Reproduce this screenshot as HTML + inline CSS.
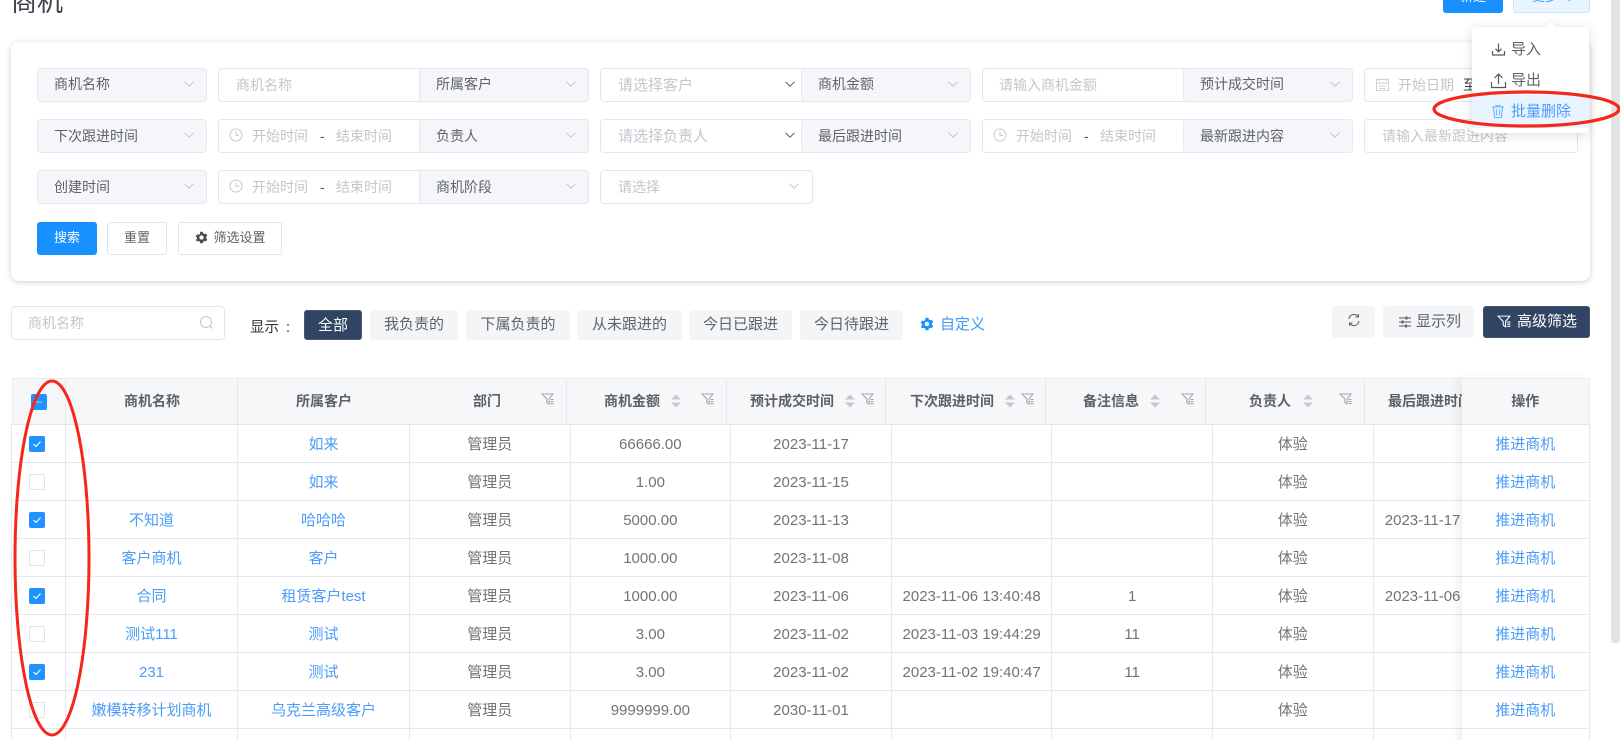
<!DOCTYPE html>
<html lang="zh">
<head>
<meta charset="utf-8">
<title>商机</title>
<style>
*{box-sizing:border-box}
html,body{margin:0;padding:0;width:1620px;height:740px;overflow:hidden;background:#fff}
body{font-family:"Liberation Sans","Noto Sans CJK SC",sans-serif;color:#606266;font-size:14px}
#r{position:absolute;left:0;top:0;width:1620px;height:740px;overflow:hidden;filter:blur(.3px)}
.a{position:absolute;white-space:nowrap}
.card{position:absolute;left:11px;top:42px;width:1579px;height:239px;background:#fff;border-radius:8px;box-shadow:0 1px 6px rgba(0,0,0,.2)}
.sel{position:absolute;width:170px;height:34px;background:#f5f6fa;border:1px solid #e5e8ef;border-radius:4px;line-height:32px;padding-left:16px;color:#5f6369;font-size:14px}
.sel.t{line-height:30px}
.sel svg{position:absolute;left:145px;top:9px}
.inp{position:absolute;height:34px;background:#fff;border:1px solid #e3e6ec;border-radius:4px}
.ph{position:absolute;color:#c3c6cd;font-size:14px;line-height:20px;white-space:nowrap}
.btn{position:absolute;top:222px;height:33px;border:1px solid #e1e4ea;border-radius:3px;background:#fff;color:#606266;font-size:13px;line-height:30px;text-align:center}
.tab{position:absolute;top:310px;height:30px;background:#f4f5f7;border-radius:3px;color:#5d6470;font-size:15px;line-height:30px;text-align:center}
.tb{position:absolute;top:306px;height:32px;background:#f4f5f7;border-radius:3px;color:#5d6470;font-size:15px;line-height:31px}
.hd{position:absolute;left:11.5px;top:378px;width:1578px;height:46.5px;background:#f6f7f8;border:1px solid #e8ebf1;border-bottom:1px solid #e2e6ee}
.vl{position:absolute;top:378px;width:1px;height:46px;background:#e4e7ee}
.th{position:absolute;top:391px;font-size:14px;line-height:20px;font-weight:700;color:#5c6068;white-space:nowrap}
table{position:absolute;border-collapse:collapse;table-layout:fixed;font-size:15px;color:#707377}
td{height:38px;padding:3px 0 0;border:1px solid #e4e8f0;text-align:center;white-space:nowrap;overflow:hidden;line-height:34px}
td.l{color:#4b9cf8}
td.c{text-align:left;padding-left:11px}
.cb{position:absolute;left:29px;width:16px;height:16px;border-radius:2px;border:1px solid #e2e4ea;background:#fff}
.cb.on{background:#1f93ff;border-color:#1f93ff}
.cb svg{position:absolute;left:2px;top:2px}
.fix{position:absolute;left:1462px;top:378px;width:127.5px;height:380px;background:#fff;box-shadow:-5px 0 8px rgba(0,0,0,.06)}
.fix .h{position:absolute;left:0;top:0;width:100%;height:46.5px;background:#f6f7f8;border-top:1px solid #e8ebf1;border-right:1px solid #e8ebf1;border-bottom:1px solid #e2e6ee;text-align:center;font-size:14px;font-weight:700;color:#5c6068;line-height:44px}
.fix .c{position:absolute;left:0;width:100%;height:38px;border-bottom:1px solid #e4e8f0;border-right:1px solid #e4e8f0;text-align:center;color:#4b9cf8;font-size:15px;line-height:40px}
.dd{position:absolute;left:1472px;top:27px;width:117px;height:106px;background:#fff;border-radius:4px;box-shadow:0 2px 12px rgba(0,0,0,.14)}
.arrow{position:absolute;left:1546px;top:23px;width:9px;height:9px;background:#fff;transform:rotate(45deg);box-shadow:-1px -1px 3px rgba(0,0,0,.05)}
.thumb{position:absolute;left:1611px;top:0;width:9px;height:643px;background:#e3e3e3;border-radius:0 0 3px 3px}
</style>
</head>
<body>
<div id="r">
<svg width="0" height="0" style="position:absolute">
<defs>
<symbol id="chev" viewBox="0 0 12 12"><path d="M1.500 3.800 6 8.200l4.500-4.400" fill="none" stroke="currentColor" stroke-width="1"/></symbol>
<symbol id="clock" viewBox="0 0 14 14"><circle cx="7" cy="7" r="6" fill="none" stroke="#c9ccd3" stroke-width="1.100"/><path d="M7 3.400V7.300H10.200" fill="none" stroke="#c9ccd3" stroke-width="1.100"/></symbol>
<symbol id="filt" viewBox="0 0 14 14"><path d="M1 2h11L8 7v5L5.800 10.500V7Z" fill="none" stroke="#9ea3ab" stroke-width="1"/><path d="M9.500 7.500h3M9.500 9.500h3M9.500 11.500h3" stroke="#9ea3ab" stroke-width="1"/></symbol>
<symbol id="sort" viewBox="0 0 12 16"><path d="M6 1.500 11 6.500H1ZM6 14.500 1 9.500H11Z" fill="#c3c7ce"/></symbol>
<symbol id="gear" viewBox="0 0 14 14"><path d="M5.600 .8h2.800l.4 1.700 1.300.7 1.700-.5 1.400 2.400-1.300 1.200v1.400l1.300 1.200-1.400 2.400-1.700-.5-1.300.7-.4 1.700H5.600l-.4-1.700-1.300-.7-1.700.5L.8 9.700l1.300-1.200V7.100L.8 5.900l1.400-2.400 1.700.5 1.300-.7Z" fill="currentColor"/><circle cx="7" cy="7" r="2.300" fill="#fff"/></symbol>
</defs>
</svg>

<!-- top -->
<div class="a" style="left:11px;top:-16px;font-size:26px;line-height:36px;color:#3a3f48">商机</div>
<div class="a" style="left:1443px;top:-20px;width:60px;height:33px;background:#1890ff;border-radius:3px;color:#fff;font-size:13px;line-height:33px;text-align:center">新建</div>
<div class="a" style="left:1513px;top:-20px;width:77px;height:33px;background:#e8f4ff;border:1px solid #c9e4fd;border-radius:3px;color:#4b9cf8;font-size:13px;line-height:31px;padding-left:18px">更多 <span style="font-size:9px;margin-left:4px">⌄</span></div>

<!-- filter card -->
<div class="card"></div>

<!-- row 1 -->
<div class="inp" style="left:218px;top:68px;width:210px"></div>
<div class="ph" style="left:236px;top:75px">商机名称</div>
<div class="inp" style="left:600px;top:68px;width:210px"></div>
<div class="ph" style="left:618px;top:76px;font-size:15px">请选择客户</div>
<svg class="a" style="left:784px;top:78px;color:#555a62" width="12" height="12"><use href="#chev"/></svg>
<div class="inp" style="left:982px;top:68px;width:210px"></div>
<div class="ph" style="left:999px;top:75px">请输入商机金额</div>
<div class="inp" style="left:1364px;top:68px;width:214px"></div>
<svg class="a" style="left:1375px;top:77px" width="15" height="15" viewBox="0 0 15 15"><path d="M1.500 2.500h12v11h-12ZM1.500 6h12M4 1v3M11 1v3M4 9h7M4 11.500h7" fill="none" stroke="#cfd2d8" stroke-width="1"/></svg>
<div class="ph" style="left:1398px;top:75px">开始日期</div>
<div class="a" style="left:1463px;top:75px;font-size:14px;line-height:20px;color:#444">至</div>

<!-- row 2 -->
<div class="inp" style="left:218px;top:119px;width:210px"></div>
<svg class="a" style="left:229px;top:128px" width="14" height="14"><use href="#clock"/></svg>
<div class="ph" style="left:252px;top:126px">开始时间</div>
<div class="a" style="left:320px;top:126px;line-height:20px;color:#555">-</div>
<div class="ph" style="left:336px;top:126px">结束时间</div>
<div class="inp" style="left:600px;top:119px;width:210px"></div>
<div class="ph" style="left:618px;top:127px;font-size:15px">请选择负责人</div>
<svg class="a" style="left:784px;top:129px;color:#555a62" width="12" height="12"><use href="#chev"/></svg>
<div class="inp" style="left:982px;top:119px;width:210px"></div>
<svg class="a" style="left:993px;top:128px" width="14" height="14"><use href="#clock"/></svg>
<div class="ph" style="left:1016px;top:126px">开始时间</div>
<div class="a" style="left:1084px;top:126px;line-height:20px;color:#555">-</div>
<div class="ph" style="left:1100px;top:126px">结束时间</div>
<div class="inp" style="left:1364px;top:119px;width:214px"></div>
<div class="ph" style="left:1382px;top:126px">请输入最新跟进内容</div>

<!-- row 3 -->
<div class="inp" style="left:218px;top:170px;width:210px"></div>
<svg class="a" style="left:229px;top:179px" width="14" height="14"><use href="#clock"/></svg>
<div class="ph" style="left:252px;top:177px">开始时间</div>
<div class="a" style="left:320px;top:177px;line-height:20px;color:#555">-</div>
<div class="ph" style="left:336px;top:177px">结束时间</div>
<div class="inp" style="left:600px;top:170px;width:213px"></div>
<div class="ph" style="left:618px;top:177px">请选择</div>
<svg class="a" style="left:788px;top:180px;color:#c0c4cc" width="12" height="12"><use href="#chev"/></svg>

<!-- select labels -->
<div class="sel t" style="left:37px;top:68px">商机名称<svg width="12" height="12" style="color:#c0c4cc"><use href="#chev"/></svg></div>
<div class="sel t" style="left:419px;top:68px">所属客户<svg width="12" height="12" style="color:#c0c4cc"><use href="#chev"/></svg></div>
<div class="sel t" style="left:801px;top:68px">商机金额<svg width="12" height="12" style="color:#c0c4cc"><use href="#chev"/></svg></div>
<div class="sel t" style="left:1183px;top:68px">预计成交时间<svg width="12" height="12" style="color:#c0c4cc"><use href="#chev"/></svg></div>
<div class="sel" style="left:37px;top:119px">下次跟进时间<svg width="12" height="12" style="color:#c0c4cc"><use href="#chev"/></svg></div>
<div class="sel" style="left:419px;top:119px">负责人<svg width="12" height="12" style="color:#c0c4cc"><use href="#chev"/></svg></div>
<div class="sel" style="left:801px;top:119px">最后跟进时间<svg width="12" height="12" style="color:#c0c4cc"><use href="#chev"/></svg></div>
<div class="sel" style="left:1183px;top:119px">最新跟进内容<svg width="12" height="12" style="color:#c0c4cc"><use href="#chev"/></svg></div>
<div class="sel" style="left:37px;top:170px">创建时间<svg width="12" height="12" style="color:#c0c4cc"><use href="#chev"/></svg></div>
<div class="sel" style="left:419px;top:170px">商机阶段<svg width="12" height="12" style="color:#c0c4cc"><use href="#chev"/></svg></div>

<!-- buttons -->
<div class="btn" style="left:37px;width:60px;background:#1890ff;border-color:#1890ff;color:#fff">搜索</div>
<div class="btn" style="left:107px;width:60px">重置</div>
<div class="btn" style="left:178px;width:104px;padding-left:19px">筛选设置</div>
<svg class="a" style="left:195px;top:231px;color:#4a4d52" width="13" height="13"><use href="#gear"/></svg>

<!-- toolbar -->
<div class="inp" style="left:11px;top:306px;width:214px"></div>
<div class="ph" style="left:28px;top:313px">商机名称</div>
<svg class="a" style="left:199px;top:315px" width="15" height="15" viewBox="0 0 15 15"><circle cx="7" cy="7" r="5.500" fill="none" stroke="#c5c8ce" stroke-width="1.100"/><path d="M11 11l2.500 2.500" stroke="#c5c8ce" stroke-width="1.100"/></svg>
<div class="a" style="left:250px;top:318px;font-size:14.500px;line-height:20px;color:#333">显示</div>
<div class="a" style="left:286px;top:318px;font-size:14.500px;line-height:20px;color:#333">:</div>
<div class="tab" style="left:304px;width:58px;background:#324463;color:#fff;border:1px solid #4a5a75;line-height:29px">全部</div>
<div class="tab" style="left:370px;width:88px">我负责的</div>
<div class="tab" style="left:466px;width:104px">下属负责的</div>
<div class="tab" style="left:577px;width:105px">从未跟进的</div>
<div class="tab" style="left:689px;width:103px">今日已跟进</div>
<div class="tab" style="left:800px;width:103px">今日待跟进</div>
<svg class="a" style="left:920px;top:317px;color:#1890ff" width="14" height="14"><use href="#gear"/></svg>
<div class="a" style="left:940px;top:315px;font-size:15px;line-height:20px;color:#3f97f6">自定义</div>

<div class="tb" style="left:1332px;width:43px"></div>
<svg class="a" style="left:1347px;top:313px" width="14" height="14" viewBox="0 0 14 14"><path d="M2 6A5 5 0 0 1 11 3.500M12 8A5 5 0 0 1 3 10.500" fill="none" stroke="#61656c" stroke-width="1.100"/><path d="M11.500 1v3h-3M2.500 13v-3h3" fill="none" stroke="#61656c" stroke-width="1"/></svg>
<div class="tb" style="left:1383px;width:91px;padding-left:33px">显示列</div>
<svg class="a" style="left:1398px;top:315px" width="14" height="14" viewBox="0 0 14 14"><path d="M1 3h12M1 7h12M1 11h12" stroke="#55595f" stroke-width="1"/><path d="M8.500 1.500v3M4.500 5.500v3M8 9.500v3" stroke="#55595f" stroke-width="1.800"/></svg>
<div class="tb" style="left:1483px;width:107px;background:#324463;color:#fff;padding-left:33px;border:1px solid #44546f;line-height:29px">高级筛选</div>
<svg class="a" style="left:1497px;top:314px" width="15" height="15" viewBox="0 0 14 14"><path d="M1 2h11L8 7v5L5.800 10.500V7Z" fill="none" stroke="#fff" stroke-width="1"/><path d="M9.500 7.500h3M9.500 9.500h3M9.500 11.500h3" stroke="#fff" stroke-width="1"/></svg>

<!-- table body -->
<table style="left:11px;top:424.300px;width:1460px">
<colgroup><col style="width:54px"><col style="width:172px"><col style="width:172px"><col style="width:160.500px"><col style="width:160.700px"><col style="width:160.600px"><col style="width:160.700px"><col style="width:160.300px"><col style="width:161px"><col style="width:98.200px"></colgroup>
<tr><td></td><td class="l"></td><td class="l">如来</td><td>管理员</td><td>66666.00</td><td>2023-11-17</td><td></td><td></td><td>体验</td><td class="c"></td></tr>
<tr><td></td><td class="l"></td><td class="l">如来</td><td>管理员</td><td>1.00</td><td>2023-11-15</td><td></td><td></td><td>体验</td><td class="c"></td></tr>
<tr><td></td><td class="l">不知道</td><td class="l">哈哈哈</td><td>管理员</td><td>5000.00</td><td>2023-11-13</td><td></td><td></td><td>体验</td><td class="c">2023-11-17</td></tr>
<tr><td></td><td class="l">客户商机</td><td class="l">客户</td><td>管理员</td><td>1000.00</td><td>2023-11-08</td><td></td><td></td><td>体验</td><td class="c"></td></tr>
<tr><td></td><td class="l">合同</td><td class="l">租赁客户test</td><td>管理员</td><td>1000.00</td><td>2023-11-06</td><td>2023-11-06 13:40:48</td><td>1</td><td>体验</td><td class="c">2023-11-06</td></tr>
<tr><td></td><td class="l">测试111</td><td class="l">测试</td><td>管理员</td><td>3.00</td><td>2023-11-02</td><td>2023-11-03 19:44:29</td><td>11</td><td>体验</td><td class="c"></td></tr>
<tr><td></td><td class="l">231</td><td class="l">测试</td><td>管理员</td><td>3.00</td><td>2023-11-02</td><td>2023-11-02 19:40:47</td><td>11</td><td>体验</td><td class="c"></td></tr>
<tr><td></td><td class="l">嫩模转移计划商机</td><td class="l">乌克兰高级客户</td><td>管理员</td><td>9999999.00</td><td>2030-11-01</td><td></td><td></td><td>体验</td><td class="c"></td></tr>
<tr><td></td><td></td><td></td><td></td><td></td><td></td><td></td><td></td><td></td><td></td></tr>
</table>

<!-- table header -->
<div class="hd"></div>
<div class="vl" style="left:65px"></div>
<div class="vl" style="left:237px"></div>
<div class="vl" style="left:566px"></div>
<div class="vl" style="left:726px"></div>
<div class="vl" style="left:885px"></div>
<div class="vl" style="left:1045px"></div>
<div class="vl" style="left:1205px"></div>
<div class="vl" style="left:1364px"></div>
<div class="th" style="left:124px">商机名称</div>
<div class="th" style="left:296px">所属客户</div>
<div class="th" style="left:473px">部门</div>
<svg class="a" style="left:541px;top:392px" width="14" height="14"><use href="#filt"/></svg>
<div class="th" style="left:604px">商机金额</div>
<svg class="a" style="left:670px;top:393px" width="12" height="16"><use href="#sort"/></svg>
<svg class="a" style="left:701px;top:392px" width="14" height="14"><use href="#filt"/></svg>
<div class="th" style="left:750px">预计成交时间</div>
<svg class="a" style="left:844px;top:393px" width="12" height="16"><use href="#sort"/></svg>
<svg class="a" style="left:861px;top:392px" width="14" height="14"><use href="#filt"/></svg>
<div class="th" style="left:910px">下次跟进时间</div>
<svg class="a" style="left:1004px;top:393px" width="12" height="16"><use href="#sort"/></svg>
<svg class="a" style="left:1021px;top:392px" width="14" height="14"><use href="#filt"/></svg>
<div class="th" style="left:1083px">备注信息</div>
<svg class="a" style="left:1149px;top:393px" width="12" height="16"><use href="#sort"/></svg>
<svg class="a" style="left:1181px;top:392px" width="14" height="14"><use href="#filt"/></svg>
<div class="th" style="left:1249px">负责人</div>
<svg class="a" style="left:1302px;top:393px" width="12" height="16"><use href="#sort"/></svg>
<svg class="a" style="left:1339px;top:392px" width="14" height="14"><use href="#filt"/></svg>
<div class="th" style="left:1388px">最后跟进时间</div>

<!-- checkboxes -->
<div class="cb on" style="left:31px;top:394px"><svg width="10" height="10"><path d="M2 5h6" stroke="#8ec8ff" stroke-width="1.200"/></svg></div>
<div class="cb on" style="top:436px"><svg width="10" height="10"><path d="M1.500 5 4 7.500 8.500 2.500" fill="none" stroke="#fff" stroke-width="1.100"/></svg></div>
<div class="cb" style="top:474px"></div>
<div class="cb on" style="top:512px"><svg width="10" height="10"><path d="M1.500 5 4 7.500 8.500 2.500" fill="none" stroke="#fff" stroke-width="1.100"/></svg></div>
<div class="cb" style="top:550px"></div>
<div class="cb on" style="top:588px"><svg width="10" height="10"><path d="M1.500 5 4 7.500 8.500 2.500" fill="none" stroke="#fff" stroke-width="1.100"/></svg></div>
<div class="cb" style="top:626px"></div>
<div class="cb on" style="top:664px"><svg width="10" height="10"><path d="M1.500 5 4 7.500 8.500 2.500" fill="none" stroke="#fff" stroke-width="1.100"/></svg></div>
<div class="cb" style="top:702px"></div>

<!-- fixed column -->
<div class="fix">
<div class="h">操作</div>
<div class="c" style="top:47.300px">推进商机</div>
<div class="c" style="top:85.300px">推进商机</div>
<div class="c" style="top:123.300px">推进商机</div>
<div class="c" style="top:161.300px">推进商机</div>
<div class="c" style="top:199.300px">推进商机</div>
<div class="c" style="top:237.300px">推进商机</div>
<div class="c" style="top:275.300px">推进商机</div>
<div class="c" style="top:313.300px">推进商机</div>
<div class="c" style="top:351.300px">推进商机</div>
</div>

<!-- dropdown -->
<div class="dd"></div>
<div class="arrow"></div>
<div class="a" style="left:1472px;top:95px;width:117px;height:33px;background:#e8f4ff"></div>
<svg class="a" style="left:1491px;top:42px" width="15" height="15" viewBox="0 0 15 15"><path d="M1.500 9v4h12V9M7.500 1.500V9.500M4.500 6.800l3 3 3-3" fill="none" stroke="#55595f" stroke-width="1.200"/></svg>
<div class="a" style="left:1511px;top:39px;font-size:15px;line-height:21px;color:#606266">导入</div>
<svg class="a" style="left:1490px;top:72px" width="17" height="17" viewBox="0 0 17 17"><path d="M1.500 10v5.500h14V10M8.500 12V2M4.500 6l4-4 4 4" fill="none" stroke="#55595f" stroke-width="1.200"/></svg>
<div class="a" style="left:1511px;top:70px;font-size:15px;line-height:21px;color:#606266">导出</div>
<svg class="a" style="left:1491px;top:104px" width="14" height="15" viewBox="0 0 14 15"><path d="M1 3h12M5 3V1.500h4V3M2.500 3l1 10.500h7l1-10.500M5.500 5.500v6M8.500 5.500v6" fill="none" stroke="#6cb3fb" stroke-width="1.100"/></svg>
<div class="a" style="left:1511px;top:101px;font-size:15px;line-height:21px;color:#4b9cf8">批量删除</div>

<!-- scrollbar -->
<div class="thumb"></div>

<!-- annotations -->
<svg class="a" style="left:0;top:0" width="1620" height="740" viewBox="0 0 1620 740">
<ellipse cx="52" cy="558" rx="37" ry="177" fill="none" stroke="#f5261a" stroke-width="3"/>
<ellipse cx="1526.500" cy="109" rx="92.500" ry="17" fill="none" stroke="#f5261a" stroke-width="3.200"/>
</svg>
</div>
</body>
</html>
